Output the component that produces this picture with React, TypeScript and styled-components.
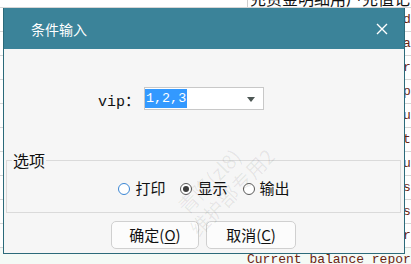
import React from "react";
import styled, { createGlobalStyle } from "styled-components";

const GlobalStyle = createGlobalStyle`
  html, body {
    margin: 0;
    padding: 0;
    background: #ffffff;
  }
  body {
    font-family: "Noto Sans CJK SC", "Noto Sans", sans-serif;
  }
`;

const sheetRows = [
  { text: "充资金明细用户充值记录查询报表", top: true },
  { text: "Transaction details data" },
  { text: "Account balance summary t" },
  { text: "Member recharge order rep" },
  { text: "Daily settlement output" },
  { text: "Customer account menu l" },
  { text: "Payment statement detail" },
  { text: "Refund statement amount" },
  { text: "Operation log details cl" },
  { text: "Withdrawal record list t" },
  { text: "Current balance report t" },
  { text: "Current balance report", tint: true },
];

const App = () => {
  const [mode, setMode] = React.useState("show");

  return (
    <>
      <GlobalStyle />
      <Page>
        <Sheet>
          {sheetRows.map((row, i) => (
            <SheetRow key={i} top={row.top} tint={row.tint}>
              <SheetCell top={row.top}>{row.text}</SheetCell>
            </SheetRow>
          ))}
        </Sheet>

        <Dialog>
          <Header>
            <Title>条件输入</Title>
            <CloseButton aria-label="close">
              <svg width="12" height="12" viewBox="0 0 12 12">
                <path d="M1 1 L11 11 M11 1 L1 11" stroke="#ffffff" strokeWidth="1.4" fill="none" />
              </svg>
            </CloseButton>
          </Header>

          <Body>
            <FieldRow>
              <FieldLabel>vip：</FieldLabel>
              <SelectBox>
                <SelectedText>1,2,3</SelectedText>
                <Arrow />
              </SelectBox>
            </FieldRow>

            <OptionSet>
              <Legend>选项</Legend>
              <RadioRow>
                <RadioItem>
                  <Radio
                    type="radio"
                    name="mode"
                    focused
                    checked={mode === "print"}
                    onChange={() => setMode("print")}
                  />
                  打印
                </RadioItem>
                <RadioItem>
                  <Radio
                    type="radio"
                    name="mode"
                    checked={mode === "show"}
                    onChange={() => setMode("show")}
                  />
                  显示
                </RadioItem>
                <RadioItem>
                  <Radio
                    type="radio"
                    name="mode"
                    checked={mode === "export"}
                    onChange={() => setMode("export")}
                  />
                  输出
                </RadioItem>
              </RadioRow>
            </OptionSet>

            <ButtonRow>
              <DialogButton width={88}>
                确定(<u>O</u>)
              </DialogButton>
              <DialogButton width={90}>
                取消(<u>C</u>)
              </DialogButton>
            </ButtonRow>
          </Body>

          <Watermark>
            <span>青隆(zl8)</span>
            <span>维护部专用2</span>
          </Watermark>
        </Dialog>
      </Page>
    </>
  );
};

const Page = styled.div`
  position: relative;
  width: 411px;
  height: 264px;
  overflow: hidden;
`;

const Sheet = styled.div`
  display: flex;
  flex-direction: column;
  margin-top: -17px;
`;

const SheetRow = styled.div<{ top?: boolean; tint?: boolean }>`
  height: ${(p) => (p.top ? 24 : 23)}px;
  border-bottom: 1px solid #d6d6d6;
  background: ${(p) => (p.tint ? "#f4faf6" : "#ffffff")};
  display: flex;
  align-items: center;
  padding-left: 247px;
  box-sizing: content-box;
`;

const SheetCell = styled.div<{ top?: boolean }>`
  height: 100%;
  display: flex;
  align-items: ${(p) => (p.top ? "flex-end" : "center")};
  border-left: ${(p) => (p.top ? "1px solid #cfcfcf" : "none")};
  padding-left: ${(p) => (p.top ? 2 : 0)}px;
  font-family: ${(p) =>
    p.top ? '"Noto Sans CJK SC", sans-serif' : '"Liberation Mono", monospace'};
  font-size: ${(p) => (p.top ? 16 : 13)}px;
  line-height: ${(p) => (p.top ? 18 : 16)}px;
  color: ${(p) => (p.top ? "#111111" : "#6a2512")};
  white-space: nowrap;
`;

const Dialog = styled.div`
  position: absolute;
  left: 3px;
  top: 8px;
  width: 402px;
  height: 246px;
  box-sizing: border-box;
  border: 1px solid #2b6a7a;
  border-top: none;
  background: #f6f6f6;
  display: flex;
  flex-direction: column;
  overflow: hidden;
`;

const Header = styled.div`
  height: 41px;
  flex-shrink: 0;
  background: #3b8399;
  margin: 0 -1px;
  display: flex;
  align-items: center;
  justify-content: space-between;
  padding: 0 17px 0 28px;
`;

const Title = styled.div`
  color: #ffffff;
  font-size: 14px;
  line-height: 20px;
  margin-top: 1px;
`;

const CloseButton = styled.button`
  border: none;
  background: none;
  padding: 0;
  width: 12px;
  height: 12px;
  display: flex;
  margin-top: 1px;
`;

const Body = styled.div`
  flex: 1;
  display: flex;
  flex-direction: column;
`;

const FieldRow = styled.div`
  display: flex;
  align-items: center;
  height: 23px;
  margin-top: 38px;
  padding-left: 94px;
`;

const FieldLabel = styled.div`
  font-family: "Liberation Mono", "Noto Sans CJK SC", monospace;
  font-size: 15px;
  color: #111111;
  width: 46px;
  margin-top: 2px;
`;

const SelectBox = styled.div`
  width: 120px;
  height: 23px;
  box-sizing: border-box;
  border: 1px solid #c8c8c8;
  background: #ffffff;
  display: flex;
  align-items: stretch;
  justify-content: space-between;
  padding: 1px 8px 1px 0;
`;

const SelectedText = styled.span`
  background: #3399ff;
  color: #ffffff;
  font-family: "Liberation Mono", monospace;
  font-size: 13.4px;
  line-height: 19px;
  padding: 0 1px;
`;

const Arrow = styled.span`
  align-self: center;
  width: 0;
  height: 0;
  border-left: 4.5px solid transparent;
  border-right: 4.5px solid transparent;
  border-top: 5px solid #4d5754;
  margin-top: 1px;
`;

const OptionSet = styled.fieldset`
  margin: 40px 3px 0 2px;
  padding: 6px 5px 12px;
  border: 1px solid #dadada;
  min-width: 0;
`;

const Legend = styled.legend`
  padding: 0 1px;
  font-size: 16px;
  line-height: 20px;
  color: #111111;
`;

const RadioRow = styled.div`
  display: flex;
  justify-content: center;
  align-items: center;
  gap: 15px;
  height: 24px;
  margin-left: 1px;
`;

const RadioItem = styled.label`
  display: flex;
  align-items: center;
  gap: 5px;
  font-size: 15px;
  line-height: 20px;
  color: #111111;
`;

const Radio = styled.input<{ focused?: boolean }>`
  appearance: none;
  margin: 0;
  width: 12px;
  height: 12px;
  border-radius: 50%;
  box-sizing: border-box;
  border: 1px solid ${(p) => (p.focused ? "#3a86d4" : "#5a5a5a")};
  background: #ffffff;
  display: grid;
  place-items: center;
  margin-top: 1px;

  &:checked::after {
    content: "";
    width: 6px;
    height: 6px;
    border-radius: 50%;
    background: #3c3c3c;
  }
`;

const ButtonRow = styled.div`
  display: flex;
  justify-content: center;
  gap: 7px;
  margin-top: 8px;
  margin-left: -1px;
`;

const DialogButton = styled.button<{ width: number }>`
  width: ${(p) => p.width}px;
  height: 28px;
  box-sizing: border-box;
  border: 1px solid #d0d0d0;
  border-radius: 5px;
  background: #fcfcfc;
  font-family: "Noto Sans CJK SC", sans-serif;
  font-size: 15px;
  line-height: 20px;
  color: #111111;
  padding: 0;

  u {
    text-underline-offset: 2px;
  }
`;

const Watermark = styled.div`
  position: absolute;
  left: 164px;
  top: 200px;
  display: flex;
  flex-direction: column;
  gap: 2px;
  transform: rotate(-46deg);
  transform-origin: left top;
  pointer-events: none;
  font-size: 20px;
  line-height: 22px;
  color: rgba(0, 0, 0, 0.07);
  white-space: nowrap;

  span:first-child {
    margin-left: 8px;
  }
`;

export default App;
